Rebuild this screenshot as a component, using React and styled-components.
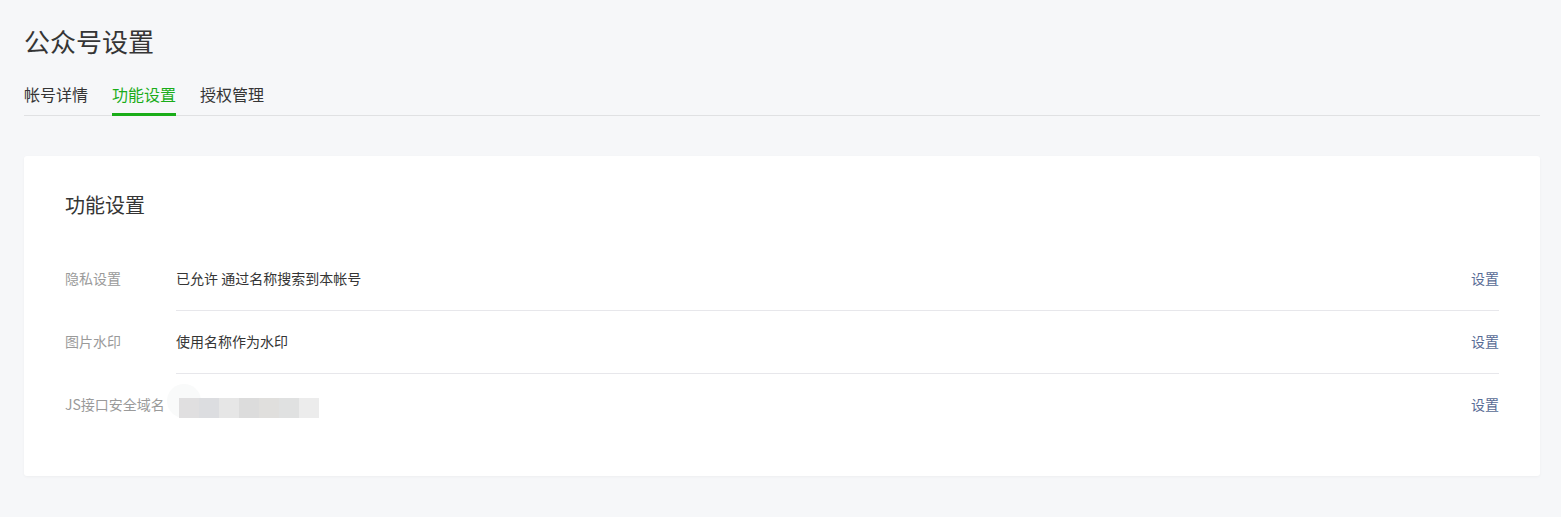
import React from "react";
import styled, { createGlobalStyle } from "styled-components";

const GlobalStyle = createGlobalStyle`
  html, body {
    margin: 0;
    padding: 0;
    background: #f6f7f9;
    font-family: "Noto Sans CJK SC", "Noto Sans", "Liberation Sans", sans-serif;
    color: #353535;
  }
`;

const Page = styled.div`
  padding: 24px 21px 40px 24px;
`;

const Title = styled.h1`
  margin: 0;
  font-size: 26px;
  font-weight: 400;
  line-height: 34px;
  color: #353535;
`;

const TabBar = styled.div`
  display: flex;
  gap: 24px;
  margin-top: 24px;
  border-bottom: 1px solid #e0e1e3;
`;

const Tab = styled.div`
  font-size: 16px;
  line-height: 24px;
  padding-bottom: 7px;
  margin-bottom: -1px;
  color: ${(p) => (p.$active ? "#1aad19" : "#353535")};
  border-bottom: 3px solid ${(p) => (p.$active ? "#1aad19" : "transparent")};
  cursor: pointer;
`;

const Card = styled.div`
  margin-top: 40px;
  background: #fff;
  border-radius: 3px;
  box-shadow: 0 1px 3px rgba(0, 0, 0, 0.04);
  padding: 37px 41px 40px 41px;
`;

const CardTitle = styled.h2`
  margin: 0 0 30px;
  font-size: 20px;
  font-weight: 400;
  line-height: 24px;
  color: #353535;
`;

const Row = styled.div`
  display: flex;
  align-items: stretch;
  font-size: 14px;
  line-height: 20px;
`;

const Label = styled.div`
  width: 111px;
  flex-shrink: 0;
  color: #9a9a9a;
  display: flex;
  align-items: center;
  padding-bottom: 2px;
  white-space: nowrap;
`;

const Body = styled.div`
  flex: 1;
  display: flex;
  align-items: center;
  justify-content: space-between;
  height: 63px;
  border-top: ${(p) => (p.$first ? "none" : "1px solid #e7e7eb")};
  box-sizing: border-box;
  padding-bottom: 2px;
`;

const Value = styled.div`
  color: #353535;
`;

const Link = styled.a`
  color: #576b95;
  text-decoration: none;
  cursor: pointer;
`;

const Mosaic = styled.div`
  position: relative;
  display: flex;
  margin-left: 3px;
  margin-top: 8px;
`;

const Glow = styled.div`
  position: absolute;
  left: -12px;
  top: -14px;
  width: 34px;
  height: 34px;
  border-radius: 50%;
  background: #f9fafa;
`;

const Cell = styled.div`
  position: relative;
  width: 20px;
  height: 20px;
`;

const mosaic = ["#e0dfe0", "#dcdde0", "#e6e6e6", "#dcdcdc", "#e0dfdd", "#e0e1e1", "#ececec"];

const rows = [
  { label: "隐私设置", value: "已允许 通过名称搜索到本帐号" },
  { label: "图片水印", value: "使用名称作为水印" },
  { label: "JS接口安全域名", value: null },
];

export default function App() {
  return (
    <>
      <GlobalStyle />
      <Page>
        <Title>公众号设置</Title>
        <TabBar>
          <Tab>帐号详情</Tab>
          <Tab $active>功能设置</Tab>
          <Tab>授权管理</Tab>
        </TabBar>
        <Card>
          <CardTitle>功能设置</CardTitle>
          {rows.map((r, i) => (
            <Row key={r.label}>
              <Label>{r.label}</Label>
              <Body $first={i === 0}>
                {r.value ? (
                  <Value>{r.value}</Value>
                ) : (
                  <Mosaic>
                    <Glow />
                    {mosaic.map((c, j) => (
                      <Cell key={j} style={{ background: c }} />
                    ))}
                  </Mosaic>
                )}
                <Link>设置</Link>
              </Body>
            </Row>
          ))}
        </Card>
      </Page>
    </>
  );
}
